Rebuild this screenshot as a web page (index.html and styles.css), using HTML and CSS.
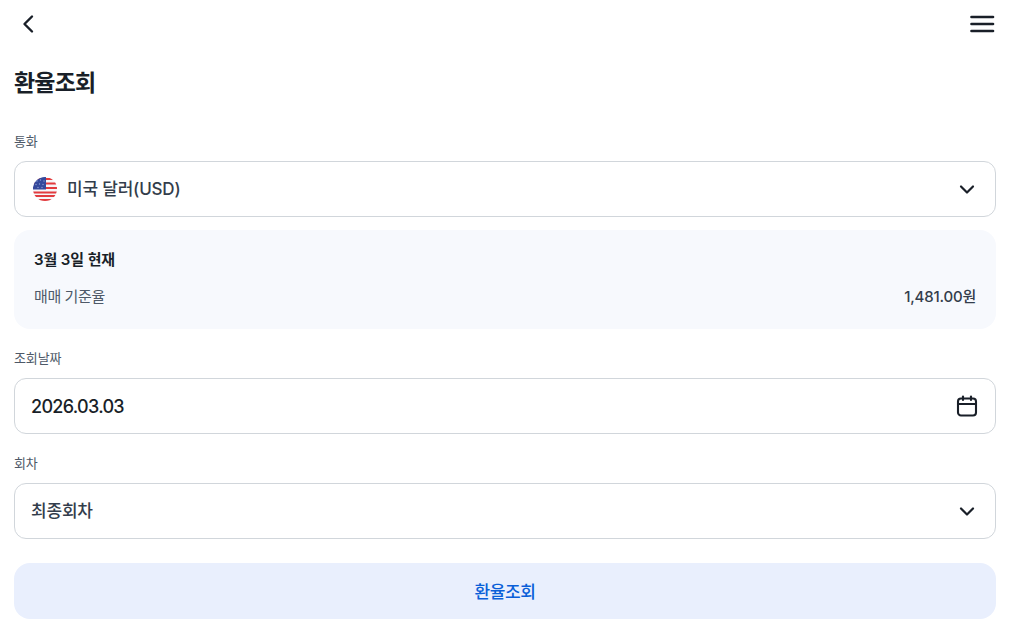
FILE: index.html

```html
<!DOCTYPE html>
<html lang="ko">
<head>
    <title>환율조회</title>
    <link rel="stylesheet" href="styles.css">
</head>
<body>
    <div class="page">
        <header class="topbar">
            <svg class="icon-back" width="28" height="28" viewBox="0 0 28 28" fill="none" stroke="#191f28" stroke-width="2.4" stroke-linecap="round" stroke-linejoin="round">
                <path d="M18 6.5 L10.5 14 L18 21.5"/>
            </svg>
            <svg class="icon-menu" width="28" height="28" viewBox="0 0 28 28" fill="none" stroke="#191f28" stroke-width="2.6" stroke-linecap="round">
                <path d="M3.5 7 H25"/>
                <path d="M3.5 14 H25"/>
                <path d="M3.5 21 H25"/>
            </svg>
        </header>

        <h1 class="title">환율조회</h1>

        <div class="label label-first">통화</div>
        <div class="field field-currency">
            <div class="field-value">
                <svg class="flag" width="24" height="24" viewBox="0 0 24 24">
                    <defs>
                        <clipPath id="flag-clip"><circle cx="12" cy="12" r="12"/></clipPath>
                    </defs>
                    <g clip-path="url(#flag-clip)">
                        <rect width="24" height="24" fill="#f6f6f8"/>
                        <rect y="1" width="24" height="2" fill="#e23b3e"/>
                        <rect y="5.5" width="24" height="2" fill="#e23b3e"/>
                        <rect y="10" width="24" height="2" fill="#e23b3e"/>
                        <rect y="14.5" width="24" height="2" fill="#e23b3e"/>
                        <rect y="18" width="24" height="2" fill="#e23b3e"/>
                        <rect y="22" width="24" height="2" fill="#e23b3e"/>
                        <rect width="13" height="12.5" fill="#34499c"/>
                        <g fill="#8f9fd2">
                            <circle cx="4" cy="4" r="0.7"/>
                            <circle cx="7.5" cy="3" r="0.7"/>
                            <circle cx="11" cy="4" r="0.7"/>
                            <circle cx="3" cy="7.5" r="0.7"/>
                            <circle cx="6.5" cy="7" r="0.7"/>
                            <circle cx="10" cy="7.5" r="0.7"/>
                            <circle cx="5" cy="10.5" r="0.7"/>
                            <circle cx="9" cy="10.5" r="0.7"/>
                        </g>
                    </g>
                </svg>
                <span class="value-text">미국 달러(USD)</span>
            </div>
            <svg class="chevron" width="24" height="24" viewBox="0 0 24 24" fill="none" stroke="#191f28" stroke-width="2.2" stroke-linecap="round" stroke-linejoin="round">
                <path d="M6 9.5 L12 15.5 L18 9.5"/>
            </svg>
        </div>

        <div class="rate-card">
            <div class="rate-date">3월 3일 현재</div>
            <div class="rate-row">
                <span class="rate-name">매매 기준율</span>
                <span class="rate-value">1,481.00원</span>
            </div>
        </div>

        <div class="label label-date">조회날짜</div>
        <div class="field">
            <div class="field-value date-value">2026.03.03</div>
            <svg class="calendar" width="24" height="24" viewBox="0 0 24 24" fill="none" stroke="#191f28" stroke-width="2.1" stroke-linecap="round" stroke-linejoin="round">
                <rect x="3" y="4.5" width="18" height="17" rx="3"/>
                <path d="M3 10 H21"/>
                <path d="M8 2.5 V6"/>
                <path d="M16 2.5 V6"/>
            </svg>
        </div>

        <div class="label label-round">회차</div>
        <div class="field">
            <div class="field-value"><span class="value-text">최종회차</span></div>
            <svg class="chevron" width="24" height="24" viewBox="0 0 24 24" fill="none" stroke="#191f28" stroke-width="2.2" stroke-linecap="round" stroke-linejoin="round">
                <path d="M6 9.5 L12 15.5 L18 9.5"/>
            </svg>
        </div>

        <button class="submit" type="button">환율조회</button>
    </div>
</body>
</html>
```

FILE: styles.css

```css
* {
    box-sizing: border-box;
}
html, body {
    margin: 0;
    background: #fff;
}
body {
    font-family: Inter, "Noto Sans CJK KR", "Noto Sans", sans-serif;
    color: #191f28;
    overflow: hidden;
}
.page {
    padding: 0 19px 0 14px;
}
.topbar {
    display: flex;
    justify-content: space-between;
    align-items: center;
    height: 48px;
}
.title {
    margin: 19px 0 0;
    font-size: 23px;
    line-height: 32px;
    font-weight: 700;
    letter-spacing: -0.8px;
}
.label {
    font-size: 13px;
    line-height: 18px;
    color: #4e5968;
    margin-bottom: 11px;
    letter-spacing: -0.1px;
}
.label-first {
    margin-top: 33px;
}
.label-date {
    margin-top: 20px;
}
.label-round {
    margin-top: 20px;
}
.field {
    display: flex;
    justify-content: space-between;
    align-items: center;
    height: 56px;
    padding: 0 16px;
    border: 1px solid #d1d6db;
    border-radius: 12px;
}
.field-value {
    display: flex;
    align-items: center;
    gap: 10px;
    font-size: 17px;
    font-weight: 500;
    color: #333d4b;
    letter-spacing: -0.2px;
}
.value-text {
    padding-bottom: 3px;
}
.field-currency {
    padding-left: 18px;
}
.date-value {
    color: #191f28;
    font-size: 18px;
    font-weight: 500;
    letter-spacing: -0.7px;
}
.rate-card {
    margin-top: 13px;
    height: 99px;
    padding: 20px 20px 0;
    border-radius: 16px;
    background: #f7f9fd;
}
.rate-date {
    font-size: 15px;
    line-height: 20px;
    font-weight: 600;
    letter-spacing: -0.1px;
}
.rate-row {
    display: flex;
    justify-content: space-between;
    margin-top: 17px;
    font-size: 15px;
    line-height: 20px;
    color: #4e5968;
}
.rate-name {
    letter-spacing: -0.4px;
}
.rate-value {
    color: #333d4b;
    font-weight: 500;
    letter-spacing: -0.2px;
}
.submit {
    display: block;
    width: 100%;
    height: 56px;
    margin-top: 24px;
    padding: 0 0 2px;
    border: none;
    border-radius: 16px;
    background: #e9effd;
    color: #0a5fd8;
    font-family: inherit;
    font-size: 17px;
    font-weight: 500;
    letter-spacing: -0.4px;
}
```
